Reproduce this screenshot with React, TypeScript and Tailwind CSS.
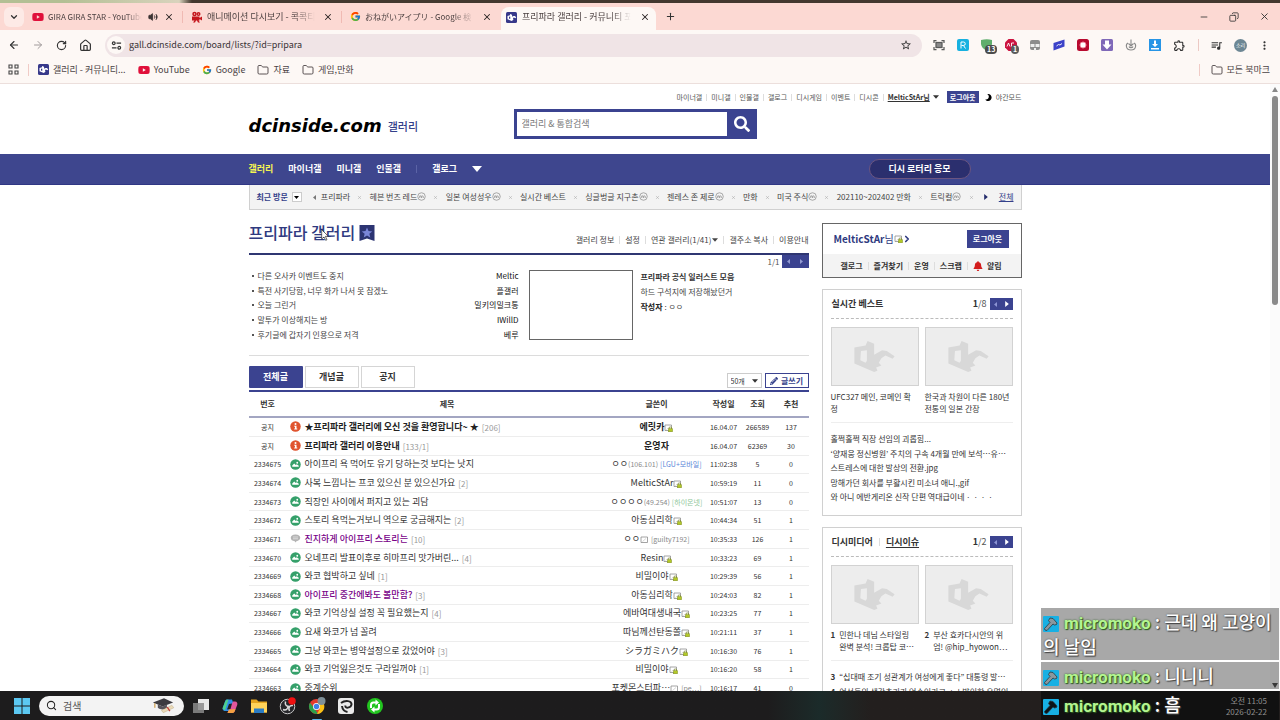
import React from "react";
import { ArrowLeft, ArrowRight, RotateCw, House, Volume2, X, Plus, ChevronDown, ChevronRight, Folder, Minus, Copy, Search } from "lucide-react";
import { FaYoutube, FaBell, FaMoon, FaPencilAlt, FaSearch } from "react-icons/fa";
import { FcGoogle } from "react-icons/fc";
import { MdStarBorder, MdQueueMusic, MdMoreVert, MdOutlineExtension } from "react-icons/md";

function YouTubeIcon() {
  return <FaYoutube className="size-3 shrink-0 text-[#e0103a]" />;
}

function DcIcon() {
  return (
    <svg viewBox="0 0 22 22" className="size-[11px] shrink-0">
      <rect width="22" height="22" rx="3" fill="#37398a" />
      <path
        d="M3 8 8 6.500V4l4 1.500.4 4L15 8h3l2.500 3-2 1.600-2.500-1.600-2 .8.8 3.800L11.500 18 3 14.500zM6 9.500v3.700l2.500.8V9z"
        fill="#fff"
        fillRule="evenodd"
      />
    </svg>
  );
}

function CameraIcon() {
  return (
    <svg viewBox="0 0 24 24" className="size-3 shrink-0" fill="#c4161c">
      <circle cx="7" cy="6" r="4.500" />
      <circle cx="15" cy="6" r="4" />
      <path d="M2 11h15v3l5-3v8l-5-3v3H2zM7 19h3l-2 4H4zM12 19h3l3 4h-4z" />
      <circle cx="7" cy="6" r="1.400" fill="#fbd9d3" />
      <circle cx="15" cy="6" r="1.200" fill="#fbd9d3" />
    </svg>
  );
}

function Placeholder() {
  return (
    <div className="flex h-[59px] items-center justify-center border border-[#d2d2d2] bg-[#ededed]">
      <svg viewBox="0 0 122 94" className="h-[31px] w-[41px]">
        <path
          d="M0 20 34 14 40 0l20 8v34l24-14 14 2 24 16-6 8-22-10-12 8-8 14 8 8-16 6 4 10-10 4L0 68zM20 30l-2 28 16 8 4-6V28z"
          fill="#d8d8d8"
          fillRule="evenodd"
        />
      </svg>
    </div>
  );
}

function ImageIcon() {
  return (
    <svg viewBox="0 0 22 22" className="size-[11px]">
      <circle cx="11" cy="11" r="10.500" fill="#35a06a" />
      <path d="M4.500 15.500V13l4-4 3 3 2-1.500 4 3v2z" fill="#fff" />
      <circle cx="14.500" cy="7.500" r="1.800" fill="#fff" />
    </svg>
  );
}

function NoticeIcon() {
  return (
    <svg viewBox="0 0 22 22" className="size-[11px]">
      <circle cx="11" cy="11" r="10.500" fill="#e0542f" />
      <circle cx="11" cy="6" r="2" fill="#fff" />
      <path d="M8.500 9.500H13V15h1.500v2h-6v-2H10v-3.500H8.500z" fill="#fff" />
    </svg>
  );
}

function TalkIcon() {
  return (
    <svg viewBox="0 0 22 22" className="size-[11px]">
      <path d="M11 3c6 0 9.500 2.700 9.500 6.500S17 16 13 16.300L10.500 19l-1-2.700C4.500 16 1.500 13.500 1.500 9.500S5 3 11 3z" fill="#b4b4b4" />
      <path d="M6 8h10M6 11.500h10" stroke="#eee" strokeWidth="1.300" />
    </svg>
  );
}

function Badge({ fixed = true }: { fixed?: boolean }) {
  return (
    <svg viewBox="0 0 18 16" className="inline-block h-2 w-[9px] shrink-0">
      <path d="M2 2h13v11H2z" fill="#fff" stroke="#8d8d8d" strokeWidth="1.600" />
      <path d="M5 11l7-6" stroke="#c4c4c4" strokeWidth="1.400" />
      {fixed && (
        <g>
          <path d="M10.500 10V8.500a2.500 2.500 0 0 1 5 0V10" fill="none" stroke="#7d8a1c" strokeWidth="1.400" />
          <rect x="9" y="9.500" width="8" height="6" fill="#b3c927" stroke="#7d8a1c" />
        </g>
      )}
    </svg>
  );
}

function TriDown({ className }: { className: string }) {
  return (
    <svg viewBox="0 0 10 6" className={className} fill="currentColor">
      <path d="M0 0h10L5 6z" />
    </svg>
  );
}

function TriLeft({ className }: { className: string }) {
  return (
    <svg viewBox="0 0 6 10" className={className} fill="currentColor">
      <path d="M6 0v10L0 5z" />
    </svg>
  );
}

function TriRight({ className }: { className: string }) {
  return (
    <svg viewBox="0 0 6 10" className={className} fill="currentColor">
      <path d="M0 0v10l6-5z" />
    </svg>
  );
}

const tabs = [
  { icon: <YouTubeIcon />, title: "GIRA GIRA STAR - YouTube", sound: true, size: "text-[8px]" },
  { icon: <CameraIcon />, title: "애니메이션 다시보기 - 콕콕티", size: "text-[9px]" },
  { icon: <FcGoogle className="size-[11px] shrink-0" />, title: "おねがいアイプリ - Google 検", size: "text-[8px]" },
  { icon: <DcIcon />, title: "프리파라 갤러리 - 커뮤니티 포", active: true, size: "text-[9px]" },
];

function TabStrip() {
  return (
    <div className="flex h-[27px] items-center bg-[#fcd9d3] pr-2 pl-1">
      <button aria-label="탭 검색" className="flex size-5 items-center justify-center rounded-md bg-[#fdeae6]">
        <ChevronDown className="size-2.5" strokeWidth={3} />
      </button>
      {tabs.map((t, i) => (
        <div
          key={t.title}
          className={
            t.active
              ? "flex h-[23px] w-[155px] items-center gap-[5px] self-end rounded-t-lg bg-[#fdf8f5] pr-1.5 pb-[3px] pl-[5px]"
              : "flex h-full w-[159px] items-center pl-2"
          }
        >
          <div
            className={
              t.active
                ? "flex min-w-0 flex-1 items-center gap-[5px]"
                : i === 2
                  ? "flex h-3 min-w-0 flex-1 items-center gap-1 pr-[9px]"
                  : "flex h-3 min-w-0 flex-1 items-center gap-1 border-r border-[#f0bab3] pr-2"
            }
          >
            {t.icon}
            <button
              className={
                t.size +
                " min-w-0 flex-1 overflow-hidden text-left leading-4 whitespace-nowrap text-[#4a3f3f] [mask-image:linear-gradient(to_right,#000_80%,transparent_98%)]"
              }
            >
              {t.title}
            </button>
            {t.sound && <Volume2 className="size-2.5 shrink-0 fill-current text-[#3c3434]" />}
            <button aria-label="탭 닫기" className="shrink-0 pl-0.5">
              <X className="size-[10px] text-[#2c2626]" strokeWidth={2.500} />
            </button>
          </div>
        </div>
      ))}
      <button aria-label="새 탭" className="ml-[9px]">
        <Plus className="size-[11px]" strokeWidth={2.200} />
      </button>
      <div className="ml-auto flex items-center gap-5 pr-0.5">
        <button aria-label="최소화"><Minus className="size-2.5" /></button>
        <button aria-label="이전 크기로"><Copy className="size-2.5 -scale-x-100" /></button>
        <button aria-label="닫기"><X className="size-[11px]" /></button>
      </div>
    </div>
  );
}

function Extensions() {
  return (
    <div className="flex items-center gap-3">
      <svg viewBox="0 0 24 24" className="size-3" fill="none" stroke="#5a5a5a" strokeWidth="2.500">
        <path d="M2 8V3h5M17 3h5v5M22 16v5h-5M7 21H2v-5" />
        <rect x="6" y="7" width="12" height="10" fill="#8a8a8a" />
      </svg>
      <svg viewBox="0 0 24 24" className="size-3">
        <rect width="24" height="24" rx="4" fill="#17b1e0" />
        <path d="M8 19V6h5a3.500 3.500 0 0 1 0 7H9m4 0 4 6" fill="none" stroke="#fff" strokeWidth="2" />
      </svg>
      <div className="relative size-3">
        <svg viewBox="0 0 24 24" className="size-3"><path d="M0 2q12-3 22 0v8q-2 9-11 13Q1 18 0 10z" fill="#5fae6c" /></svg>
        <span className="absolute top-1.5 left-1 rounded-sm bg-[#4c4c4c] px-0.5 text-[7px] leading-[9px] font-bold text-white">13</span>
      </div>
      <div className="relative size-3">
        <svg viewBox="0 0 24 24" className="size-3"><path d="M7 0h10l7 7v10l-7 7H7l-7-7V7z" fill="#cc1440" /><path d="M4 15l3-7 3 7m3 0V8h5" stroke="#fff" strokeWidth="1.800" fill="none" /></svg>
        <span className="absolute top-1.5 left-1.5 rounded-sm bg-[#5c5c5c] px-0.5 text-[7px] leading-[9px] font-bold text-white">1</span>
      </div>
      <svg viewBox="0 0 24 24" className="size-3">
        <rect x="2" y="2" width="20" height="20" rx="4" fill="#8c8c8c" />
        <path d="M3 10h8v6H3zM13 10h8v6h-8zM10 18h4v5h-4z" fill="#eee" />
      </svg>
      <svg viewBox="0 0 24 24" className="size-3">
        <path d="M1 8 23 1v14L1 23z" fill="#3c42c8" />
        <path d="m7 14 4-3 3 1 4-3" stroke="#fff" strokeWidth="1.800" fill="none" />
      </svg>
      <svg viewBox="0 0 24 24" className="size-3">
        <rect width="24" height="24" rx="5" fill="#b80a2f" />
        <circle cx="12" cy="12" r="6" fill="#fff" stroke="#f08a9c" strokeWidth="2" />
      </svg>
      <svg viewBox="0 0 24 24" className="size-3">
        <rect width="24" height="24" rx="3" fill="#7f68b8" />
        <path d="M8 3h8v8h5l-9 10-9-10h5z" fill="#fff" />
      </svg>
      <svg viewBox="0 0 24 24" className="size-3" fill="none" stroke="#8a8a8a" strokeWidth="2.200">
        <path d="M12 1v13m-5-5 5 5 5-5" />
        <path d="M6 8c-5 2-5 14 6 14S23 10 18 8M8 15c1 3 7 3 8 0" />
      </svg>
      <svg viewBox="0 0 24 24" className="size-3">
        <rect width="24" height="24" fill="#2795e6" />
        <path d="M10 3h4v7h4l-6 6-6-6h4zM4 18h16v3H4z" fill="#fff" />
      </svg>
      <MdOutlineExtension className="size-[13px] text-[#333]" />
    </div>
  );
}

function Toolbar() {
  return (
    <div className="flex h-[30px] items-center bg-[#fdf8f5] pr-[9px] pl-2">
      <div className="flex items-center gap-3 text-[#333]">
        <button aria-label="뒤로"><ArrowLeft className="size-3" strokeWidth={2.200} /></button>
        <button aria-label="앞으로"><ArrowRight className="size-3 text-[#a09a9a]" /></button>
        <button aria-label="새로고침"><RotateCw className="size-[11px]" strokeWidth={2.500} /></button>
        <button aria-label="홈"><House className="size-[13px]" strokeWidth={2.200} /></button>
      </div>
      <div className="ml-[13px] flex h-[23px] flex-1 items-center rounded-full bg-[#f0e4e6] pr-2.5 pl-0.5">
        <button aria-label="사이트 정보" className="flex size-[18px] items-center justify-center rounded-full bg-[#fdf8f5]">
          <svg viewBox="0 0 24 24" className="size-[11px]" fill="none" stroke="#333" strokeWidth="2.600">
            <circle cx="6" cy="7" r="3" /><path d="M12 7h10M2 17h10" /><circle cx="18" cy="17" r="3" />
          </svg>
        </button>
        <input
          aria-label="주소창"
          defaultValue="gall.dcinside.com/board/lists/?id=pripara"
          className="ml-1 min-w-0 flex-1 bg-transparent text-[9px] leading-4 text-[#3a3336] outline-none"
        />
        <button aria-label="북마크에 추가"><MdStarBorder className="size-3 text-[#333]" /></button>
      </div>
      <div className="ml-[11px] flex items-center">
        <Extensions />
        <div className="ml-3 h-3 w-px bg-[#ecc9c4]" />
        <button aria-label="미디어 제어" className="ml-[11px]"><MdQueueMusic className="size-[13px] text-[#333]" /></button>
        <button className="ml-[11px] flex size-[13px] items-center justify-center rounded-full bg-[#6d8794] text-[5px] text-white">소리</button>
        <button aria-label="메뉴" className="ml-[11px]"><MdMoreVert className="size-[13px]" /></button>
      </div>
    </div>
  );
}

function Bookmarks() {
  return (
    <div className="flex h-6 items-center border-b border-[#ecdfdc] bg-[#fdf8f5] pr-2.5 pb-1 pl-2 text-[9px] leading-4 text-[#4a4244]">
      <svg viewBox="0 0 22 22" className="size-[11px]" fill="none" stroke="#444" strokeWidth="2.200">
        <path d="M2 2h6v6H2zM14 2h6v6h-6zM2 14h6v6H2zM14 14h6v6h-6z" />
      </svg>
      <div className="ml-[9px] h-3 w-px bg-[#f0cbc6]" />
      <div className="ml-[9px] flex items-center gap-3">
        <a href="#dc" className="flex items-center gap-1"><DcIcon />갤러리 - 커뮤니티...</a>
        <a href="#yt" className="flex items-center gap-1"><YouTubeIcon />YouTube</a>
        <a href="#gg" className="flex items-center gap-1"><FcGoogle className="size-[10px]" />Google</a>
        <a href="#f1" className="flex items-center gap-1"><Folder className="size-3" strokeWidth={1.800} />자료</a>
        <a href="#f2" className="flex items-center gap-1"><Folder className="size-3" strokeWidth={1.800} />게임,만화</a>
      </div>
      <div className="ml-auto h-3 w-px bg-[#f0cbc6]" />
      <a href="#all" className="ml-[11px] flex items-center gap-1"><Folder className="size-3" strokeWidth={1.800} />모든 북마크</a>
    </div>
  );
}

const topLinks = ["마이너갤", "미니갤", "인물갤", "갤로그", "디시게임", "이벤트", "디시콘"];

function SiteHeader() {
  return (
    <header className="mx-auto flex h-[70px] w-full max-w-[773px] justify-between">
      <div className="flex w-[265px] items-center gap-1.5 pt-[14px]">
        <a href="#home" className="font-['DejaVu_Sans'] text-[18px] leading-5 font-bold text-black italic">dcinside.com</a>
        <a href="#gall" className="text-[11px] leading-5 font-medium text-[#34408a]">갤러리</a>
      </div>
      <form className="mt-[25px] flex h-[30px] w-[243px] bg-[#3b4390]" onSubmit={(e) => e.preventDefault()}>
        <input
          aria-label="갤러리 & 통합검색"
          placeholder="갤러리 & 통합검색"
          className="my-[3px] ml-[3px] min-w-0 flex-1 bg-white px-[5px] text-[9px] leading-4 outline-none placeholder:text-[#777]"
        />
        <button aria-label="검색" className="flex w-[30px] items-center justify-center text-white">
          <FaSearch className="size-4" />
        </button>
      </form>
      <div className="-ml-20 flex w-[345px] items-center gap-1 self-start pt-[7px] text-[7px] leading-3 whitespace-nowrap text-[#555]">
        {topLinks.map((l) => (
          <React.Fragment key={l}>
            <a href="#top">{l}</a>
            <span className="h-[7px] w-px bg-[#ddd]" />
          </React.Fragment>
        ))}
        <button className="flex items-center gap-[3px] font-bold text-[#333]">
          <span className="underline underline-offset-1">MelticStAr님</span>
          <TriDown className="h-1 w-1.5" />
        </button>
        <button className="ml-1 bg-[#3b4390] px-[3px] font-bold text-white">로그아웃</button>
        <a href="#night" className="ml-auto flex items-center gap-1">
          <FaMoon className="size-[7px] -scale-x-100 text-black" />
          야간모드
        </a>
      </div>
    </header>
  );
}

function Nav() {
  return (
    <nav className="h-[31px] border-b border-[#303784] bg-[#3e468e]">
      <div className="mx-auto flex h-full w-full max-w-[773px] items-center gap-[15px] text-[9px] leading-4 font-bold text-white">
        <a href="#g" className="text-[#f5f552]">갤러리</a>
        <a href="#m">마이너갤</a>
        <a href="#n">미니갤</a>
        <a href="#p">인물갤</a>
        <span className="h-2 w-px bg-[#5b63a6]" />
        <a href="#l">갤로그</a>
        <button aria-label="더보기"><TriDown className="h-1.5 w-2.5" /></button>
        <a href="#lottery" className="mr-[51px] ml-auto flex h-5 w-[102px] items-center justify-center rounded-full border border-[#6b5580] bg-[#2b2f6e]">
          디시 로터리 응모
        </a>
      </div>
    </nav>
  );
}

const recents = [
  ["프리파라", false],
  ["헤븐 번즈 레드", true],
  ["일본 여성성우", true],
  ["실시간 베스트", false],
  ["싱글벙글 지구촌", true],
  ["젠레스 존 제로", true],
  ["만화", false],
  ["미국 주식", true],
  ["202110~202402 만화", false],
  ["트릭컬", true],
] as const;

function MinorMark() {
  return (
    <svg viewBox="0 0 18 18" role="img" aria-label="마이너" className="mb-0.5 size-[9px]" fill="none" stroke="#888">
      <circle cx="9" cy="9" r="7.500" strokeWidth="1.400" />
      <path d="M5.500 12V7.500M5.500 8.500q3.500-2 3.500.8V12M9 8.500q3.500-2 3.500.8V12" strokeWidth="1.500" />
    </svg>
  );
}

function RecentBar() {
  return (
    <div className="mx-auto flex h-[25px] w-full max-w-[773px] items-center border border-t-0 border-[#d0d0d0] bg-[#f3f3f3] px-[7px] text-[8px] leading-3 whitespace-nowrap text-[#444]">
      <span className="font-bold text-[#34408a]">최근 방문</span>
      <button aria-label="최근 방문 펼치기" className="ml-1 flex size-[10px] items-center justify-center border border-[#ccc] bg-white">
        <TriDown className="h-[3px] w-[5px] text-black" />
      </button>
      <TriLeft className="ml-[11px] h-[5px] w-[3px] text-[#777]" />
      <ul className="ml-[5px] flex flex-1 items-center justify-between">
        {recents.map(([name, minor]) => (
          <React.Fragment key={name}>
            <li className="flex items-center">
              <a href="#r">{name}</a>
              {minor && <MinorMark />}
            </li>
            <li aria-hidden="true"><X className="size-[5px] text-[#999]" /></li>
          </React.Fragment>
        ))}
      </ul>
      <TriRight className="ml-2.5 h-1.5 w-1 text-[#222a6a]" />
      <a href="#all" className="ml-[11px] text-[#34408a] underline underline-offset-1">전체</a>
    </div>
  );
}

function Pager({ page, total }: { page: string; total: string }) {
  return (
    <div className="flex items-center gap-[3px] text-[9px] leading-3 text-[#555]">
      <span><b className="text-[#333]">{page}</b>/{total}</span>
      <span className="flex h-3 w-[23px] bg-[#3b4390]">
        <button aria-label="이전" className="flex flex-1 items-center justify-center text-[#8c94d4]"><TriLeft className="h-[5px] w-[3px]" /></button>
        <button aria-label="다음" className="flex flex-1 items-center justify-center text-white"><TriRight className="h-1.5 w-1" /></button>
      </span>
    </div>
  );
}

const issues = [
  ["다른 오사카 이벤트도 중지", "Meltic"],
  ["특전 사기당함, 너무 화가 나서 못 참겠노", "플갤러"],
  ["오늘 그린거", "밀키의밀크통"],
  ["말투가 이상해지는 방", "IWillD"],
  ["후기글에 갑자기 인용으로 저격", "베루"],
];

function GalleryHead() {
  return (
    <section>
      <div className="flex h-[45px] items-center justify-between border-b-2 border-[#2f3672] text-[8px] text-[#444]">
        <h1 className="flex items-center gap-1 text-[16px] leading-6 font-medium text-[#2f3a80]">
          프리파라 갤러리
          <svg viewBox="0 0 32 32" className="mt-0.5 size-4">
            <path d="M1 0h30v32l-15-5-15 5z" fill="#2c3472" />
            <path d="m16 5 3 7.200 7.500.6-5.800 4.800 1.900 7.200L16 20.800l-6.600 4 1.900-7.200-5.800-4.800 7.500-.6z" fill="#7a86d8" />
          </svg>
        </h1>
        <div className="flex items-center gap-[5px] pt-4 leading-3 whitespace-nowrap">
          <a href="#info">갤러리 정보</a>
          <span className="h-2 w-px bg-[#ddd]" />
          <a href="#set">설정</a>
          <span className="h-2 w-px bg-[#ddd]" />
          <button className="flex items-center gap-px">연관 갤러리(1/41)<TriDown className="h-1 w-1.5" /></button>
          <span className="h-2 w-px bg-[#ddd]" />
          <button>갤주소 복사</button>
          <span className="h-2 w-px bg-[#ddd]" />
          <a href="#use">이용안내</a>
        </div>
      </div>
      <div className="flex h-[13px] items-center justify-end gap-0.5 text-[8px] leading-3 text-[#555]">
        1/1
        <span className="flex h-full w-[27px] bg-[#3b4390] text-[#949bd2]">
          <button aria-label="이전" className="flex flex-1 items-center justify-center"><TriLeft className="h-[5px] w-[3px]" /></button>
          <button aria-label="다음" className="flex flex-1 items-center justify-center"><TriRight className="h-[5px] w-[3px]" /></button>
        </span>
      </div>
      <div className="flex h-[88px] border-b border-[#dcdcdc] pt-px text-[8px]">
        <ul className="grid h-[73px] w-[270px] grid-rows-5 pl-[3px] text-[#444]">
          {issues.map(([t, w]) => (
            <li key={t} className="flex items-center justify-between leading-3">
              <a href="#issue" className="flex items-center gap-1"><span className="size-[2px] bg-[#555]" />{t}</a>
              <span className="text-[#111]">{w}</span>
            </li>
          ))}
        </ul>
        <div className="mt-px ml-2.5 h-[70px] w-[104px] border border-[#666]" />
        <div className="ml-2 grid h-[46px] grid-rows-3 items-center leading-3 text-[#444]">
          <b className="text-[#333]">프리파라 공식 일러스트 모음</b>
          <p>하드 구석지에 저장해놨던거</p>
          <p><b className="text-[#222]">작성자</b> : ㅇㅇ</p>
        </div>
      </div>
    </section>
  );
}

type Writer = { name: string; badge?: "fixed" | "half"; ip?: string; net?: string; netColor?: string; id?: string };
type Row = { no: string; kind: "notice" | "image" | "talk"; title: string; reply?: string; visited?: boolean; writer: Writer; date: string; views: string; rec: string };

const f = (name: string): Writer => ({ name, badge: "fixed" });

const rows: Row[] = [
  { no: "공지", kind: "notice", title: "★프리파라 갤러리에 오신 것을 환영합니다~ ★", reply: "206", writer: f("에릿카"), date: "16.04.07", views: "266589", rec: "137" },
  { no: "공지", kind: "notice", title: "프리파라 갤러리 이용안내", reply: "133/1", writer: { name: "운영자" }, date: "16.04.07", views: "62369", rec: "30" },
  { no: "2334675", kind: "image", title: "아이프리 욕 먹어도 유기 당하는것 보다는 낫지", writer: { name: "ㅇㅇ", ip: "106.101", net: "LGU+모바일", netColor: "text-[#5b86d8]" }, date: "11:02:38", views: "5", rec: "0" },
  { no: "2334674", kind: "image", title: "사복 느낌나는 프코 있으신 분 있으신가요", reply: "2", writer: f("MelticStAr"), date: "10:59:19", views: "11", rec: "0" },
  { no: "2334673", kind: "image", title: "직장인 사이에서 퍼지고 있는 괴담", writer: { name: "ㅇㅇㅇㅇ", ip: "49.254", net: "하이온넷", netColor: "text-[#8fc79b]" }, date: "10:51:07", views: "13", rec: "0" },
  { no: "2334672", kind: "image", title: "스토리 욕먹는거보니 역으로 궁금해지는", reply: "2", writer: f("아동심리학"), date: "10:44:34", views: "51", rec: "1" },
  { no: "2334671", kind: "talk", title: "진지하게 아이프리 스토리는", reply: "10", visited: true, writer: { name: "ㅇㅇ", badge: "half", id: "guilty7192" }, date: "10:35:33", views: "126", rec: "1" },
  { no: "2334670", kind: "image", title: "오네프리 발표이후로 히마프리 맛가버린...", reply: "4", writer: f("Resin"), date: "10:33:23", views: "69", rec: "1" },
  { no: "2334669", kind: "image", title: "와코 협박하고 싶네", reply: "1", writer: f("비밀이야"), date: "10:29:39", views: "56", rec: "1" },
  { no: "2334668", kind: "image", title: "아이프리 중간에봐도 볼만함?", reply: "3", visited: true, writer: f("아동심리학"), date: "10:24:03", views: "82", rec: "1" },
  { no: "2334667", kind: "image", title: "와코 기억상실 설정 꼭 필요했는지", reply: "4", writer: f("에바여대생내국"), date: "10:23:25", views: "77", rec: "1" },
  { no: "2334666", kind: "image", title: "요새 와코가 넘 꼴려", writer: f("따님께선탄동쫄"), date: "10:21:11", views: "37", rec: "1" },
  { no: "2334665", kind: "image", title: "그냥 와코는 병약설정으로 갔었어야", reply: "3", writer: f("シラガミハク"), date: "10:16:30", views: "76", rec: "1" },
  { no: "2334664", kind: "image", title: "와코 기억잃은것도 구라일꺼야", reply: "1", writer: f("비밀이야"), date: "10:16:20", views: "58", rec: "1" },
  { no: "2334663", kind: "image", title: "중계순위", writer: { name: "포켓몬스터파⋯", badge: "half", id: "pe⋯" }, date: "10:16:17", views: "41", rec: "0" },
];

function PostRow({ row }: { row: Row }) {
  const notice = row.kind === "notice";
  const w = row.writer;
  return (
    <tr className="border-b border-[#ededed] text-center text-[7px] leading-3 text-[#333]">
      <td>{row.no}</td>
      <td>
        <div className="flex h-3 items-center gap-1 pl-[3px] text-[9px] whitespace-nowrap">
          {notice ? <NoticeIcon /> : row.kind === "image" ? <ImageIcon /> : <TalkIcon />}
          <a
            href="#post"
            className={notice ? "font-bold text-[#222]" : row.visited ? "font-medium text-[#770088]" : "text-[#333]"}
          >
            {row.title}
          </a>
          {row.reply && <a href="#reply" className="-ml-px pt-0.5 text-[8px] text-[#999]">[{row.reply}]</a>}
        </div>
      </td>
      <td>
        <div className="flex h-3 items-center justify-center text-[9px] whitespace-nowrap">
          <span className={notice ? "font-bold text-[#222]" : "text-[#333]"}>{w.name}</span>
          {w.ip && <span className="text-[7px] text-[#888]">({w.ip})</span>}
          {w.net && <span className={"ml-0.5 text-[7px] " + w.netColor}>[{w.net}]</span>}
          {w.badge && <span className="flex pt-0.5"><Badge fixed={w.badge === "fixed"} /></span>}
          {w.id && <span className="ml-0.5 text-[7px] text-[#888]">[{w.id}]</span>}
        </div>
      </td>
      <td>{row.date}</td>
      <td>{row.views}</td>
      <td>{row.rec}</td>
    </tr>
  );
}

function Board() {
  return (
    <section>
      <div className="flex h-[34px] justify-between pt-2.5">
        <div className="flex h-[22px] gap-0.5 text-[9px] leading-4 font-bold">
          <button className="w-[54px] rounded-[1px] bg-[#3b4390] text-white">전체글</button>
          <button className="w-[54px] border border-[#d5d5d5] text-[#333]">개념글</button>
          <button className="w-[54px] border border-[#d5d5d5] text-[#333]">공지</button>
        </div>
        <div className="mb-0.5 flex h-[15px] items-center gap-[3px] self-end text-[8px] leading-3">
          <div className="relative flex h-full w-[35px] items-center">
            <select aria-label="목록 수" className="h-full w-full appearance-none border border-[#ccc] bg-white pl-[3px] text-[7px] text-[#333]">
              <option>50개</option>
              <option>100개</option>
            </select>
            <TriDown className="pointer-events-none absolute right-1 h-1 w-1.5 text-[#333]" />
          </div>
          <button className="flex h-full w-11 items-center justify-center gap-[3px] border border-[#3b4390] font-bold text-[#34408a]">
            <FaPencilAlt className="size-2" />
            글쓰기
          </button>
        </div>
      </div>
      <table className="h-[308px] w-full table-fixed border-collapse border-t-2 border-[#3b4390]">
        <colgroup>
          <col className="w-[38px]" />
          <col />
          <col className="w-[98px]" />
          <col className="w-[36px]" />
          <col className="w-[32px]" />
          <col className="w-[35px]" />
        </colgroup>
        <thead>
          <tr className="h-[26px] border-b-2 border-[#a3a6c2] text-[8px] leading-3 text-[#333]">
            <th>번호</th>
            <th>제목</th>
            <th>글쓴이</th>
            <th>작성일</th>
            <th>조회</th>
            <th>추천</th>
          </tr>
        </thead>
        <tbody>
          {rows.map((r) => (
            <PostRow key={r.no + r.title} row={r} />
          ))}
        </tbody>
      </table>
    </section>
  );
}

const best = ["훌쩍훌쩍 직장 선임의 괴롭힘...", "‘양재웅 정신병원’ 주치의 구속 4개월 만에 보석⋯유⋯", "스트레스에 대한 발상의 전환.jpg", "망해가던 회사를 부활시킨 미소녀 애니.,gif", "와 아니 에반게리온 신작 단편 역대급이네ㆍㆍㆍㆍ"];

function Sidebar() {
  return (
    <aside className="flex w-[200px] shrink-0 flex-col gap-[11px] pt-[13px] text-[8px] leading-3 text-[#333]">
      <section className="h-[55px] border border-[#666] bg-white">
        <div className="flex h-[30px] items-center justify-between pr-3 pl-[11px]">
          <a href="#me" className="flex items-center text-[10px] text-[#2f3a80]">
            <b>MelticStAr</b>님
            <Badge />
            <ChevronRight className="-ml-px size-[10px]" strokeWidth={4} />
          </a>
          <button className="h-[18px] w-[42px] bg-[#3b4390] font-bold text-white">로그아웃</button>
        </div>
        <div className="flex h-[23px] items-center gap-[5px] bg-[#f3f3f3] pl-[18px] font-bold whitespace-nowrap">
          <a href="#a">갤로그</a>
          <span className="h-2 w-px bg-[#ddd]" />
          <a href="#b">즐겨찾기</a>
          <span className="h-2 w-px bg-[#ddd]" />
          <a href="#c">운영</a>
          <span className="h-2 w-px bg-[#ddd]" />
          <a href="#d">스크랩</a>
          <span className="h-2 w-px bg-[#ddd]" />
          <a href="#e" className="flex items-center gap-1"><FaBell className="size-[10px] text-[#d31c1c]" />알림</a>
        </div>
      </section>
      <section className="h-[227px] border border-[#d0d0d0] px-2">
        <div className="flex h-[29px] items-center justify-between border-b border-dashed border-[#bbb]">
          <h2 className="pl-px text-[9px] font-bold">실시간 베스트</h2>
          <Pager page="1" total="8" />
        </div>
        <div className="grid grid-cols-2 gap-x-1.5 gap-y-[5px] border-b border-[#eee] pt-2 pb-[7px]">
          <Placeholder />
          <Placeholder />
          <a href="#1" className="pr-1">UFC327 메인, 코메인 확정</a>
          <a href="#2">한국과 차원이 다른 180년 전통의 일본 간장</a>
        </div>
        <ul className="mt-[10px] grid h-[73px] grid-rows-5 whitespace-nowrap">
          {best.map((t) => (
            <li key={t}><a href="#best">{t}</a></li>
          ))}
        </ul>
      </section>
      <section className="h-[227px] border border-[#d0d0d0] px-2">
        <div className="flex h-[29px] items-center border-b border-dashed border-[#bbb] text-[9px] font-bold">
          <h2 className="pl-px">디시미디어</h2>
          <span className="mx-1.5 h-2 w-px bg-[#ddd]" />
          <h2 className="mr-auto underline underline-offset-2">디시이슈</h2>
          <div className="font-normal"><Pager page="1" total="2" /></div>
        </div>
        <div className="grid grid-cols-2 gap-x-1.5 gap-y-[5px] border-b border-[#eee] pt-2 pb-[7px]">
          <Placeholder />
          <Placeholder />
          <div className="flex gap-1 pr-1"><b>1</b><a href="#i1">민한나 데님 스타일링 완벽 분석! 크롭탑 코⋯</a></div>
          <div className="flex gap-1"><b>2</b><a href="#i2">부산 효카다시안의 위엄! @hip_hyowon⋯</a></div>
        </div>
        <ul className="mt-[10px] grid h-[73px] grid-rows-5 whitespace-nowrap">
          <li className="flex gap-1"><b>3</b><a href="#i3">“십대때 조기 성관계가 여성에게 좋다” 대통령 발⋯</a></li>
          <li className="flex gap-1"><b>4</b><a href="#i4">여성들의 색감추리가 억수이라고 ㅅㅣ발이한 유명인</a></li>
        </ul>
      </section>
    </aside>
  );
}

function Taskbar() {
  return (
    <footer className="flex h-[29px] shrink-0 items-center bg-linear-to-r from-[#1d1c1d] from-60% via-[#1b2b2a] via-64% to-[#231f1e] to-68% pr-3 pl-3.5">
      <button aria-label="시작">
        <svg viewBox="0 0 32 32" className="size-4"><path d="M0 0h15v15H0zM17 0h15v15H17zM0 17h15v15H0zM17 17h15v15H17z" fill="#5cc8f2" /></svg>
      </button>
      <label className="ml-[9px] flex h-5 w-[145px] items-center rounded-full bg-[#f3f3f3] pr-2 pl-[7px]">
        <Search className="size-[11px] text-[#222]" strokeWidth={2.200} />
        <input aria-label="검색" placeholder="검색" className="ml-[6px] min-w-0 flex-1 bg-transparent text-[10px] leading-4 outline-none placeholder:text-[#555]" />
        <svg viewBox="0 0 72 46" className="h-[15px] w-6">
          <path d="M2 14 36 1l28 13-32 12z" fill="#3c3b40" />
          <path d="M17 20v10c8 7 20 7 28 0V20l-13 6z" fill="#55535a" />
          <path d="M8 16v14" stroke="#c48a2a" strokeWidth="3" />
          <path d="m28 38 32-16 6 8-32 15z" fill="#e9d9b8" stroke="#a98f5d" />
          <path d="m46 28 8 12" stroke="#c2403a" strokeWidth="4" />
        </svg>
      </label>
      <div className="ml-2 flex items-center gap-[11px]">
        <svg viewBox="0 0 36 36" className="size-[18px]"><path d="M12 4h22v22H12z" fill="#e8e8e8" /><path d="M2 12h22v20H2z" fill="#8b8b8b" opacity=".85" /></svg>
        <svg viewBox="0 0 36 36" className="size-[18px]">
          <path d="M12 5h10l4 11-6 12H9C4 28 2 24 4 20l4-11c1-3 2-4 4-4z" fill="#2f8fe8" />
          <path d="M7 13c2-7 4-8 8-8l-4 13-3 9-5-4z" fill="#4fd08c" />
          <path d="M24 9h4c4 0 6 4 4 8l-4 10c-1 3-3 5-5 5H13z" fill="#e2559b" />
          <path d="M13 32h10c3 0 4-2 5-5l1-3-13 1z" fill="#f5a142" />
          <path d="m16 14 6-1-3 11-7 1z" fill="#202020" />
        </svg>
        <svg viewBox="0 0 36 36" className="size-[18px]"><path d="M2 5h11l4 4h17v22H2z" fill="#e5a520" /><path d="M2 12h32v19H2z" fill="#ffd35a" /><path d="M8 23h20v9H8z" fill="#2b7cc4" /></svg>
        <svg viewBox="0 0 36 36" className="size-[18px]">
          <circle cx="17" cy="19" r="14.500" fill="#26262a" stroke="#c9c9c9" strokeWidth="2" />
          <path d="M13 9c-2 8 3 10 8 10M28 17c-7-1-10 5-7 11M8 25c6 3 10-1 10-7" fill="none" stroke="#d8d8d8" strokeWidth="3" />
          <circle cx="26" cy="8" r="7.500" fill="#f01010" />
        </svg>
        <div className="relative flex">
          <svg viewBox="0 0 36 36" className="size-[18px]">
            <circle cx="17" cy="19" r="15" fill="#e33b2e" />
            <path d="M4 11.500 13 23l7 10.500A15 15 0 0 1 4 11.500z" fill="#2ba24c" />
            <path d="M17 12h14a15 15 0 0 1-13 22l6-11z" fill="#fbc116" />
            <circle cx="17" cy="19" r="7" fill="#fff" /><circle cx="17" cy="19" r="5.500" fill="#3f7fe8" />
            <circle cx="27" cy="8" r="8" fill="#7d8f98" />
          </svg>
          <span className="absolute -bottom-1.5 left-1 h-0.5 w-2.5 rounded-full bg-[#5cb4ec]" />
        </div>
        <svg viewBox="0 0 36 36" className="size-[18px]">
          <rect x="2" y="2" width="32" height="32" rx="6" fill="#e9e9e9" />
          <path d="M8 12c8-6 22-5 21 3-1 7-14 9-12 2M10 18c1 8 6 11 11 12" fill="none" stroke="#222" strokeWidth="4" />
        </svg>
        <svg viewBox="0 0 36 36" className="size-[18px]">
          <circle cx="18" cy="18" r="16" fill="#22c51f" />
          <path d="M10 22v-6a5 5 0 0 1 5-5h5M26 14v6a5 5 0 0 1-5 5h-5" fill="none" stroke="#fff" strokeWidth="4" />
          <path d="m19 5 7 6-7 6zM17 19l-7 6 7 6z" fill="#fff" />
        </svg>
      </div>
    </footer>
  );
}

function HammerIcon({ dark }: { dark?: boolean }) {
  return (
    <svg viewBox="0 0 32 32" className="mr-[5px] inline-block size-4 align-[-3px]">
      <rect width="32" height="32" rx="2" fill="#17b0e4" />
      <path
        d="M14 4 20 5l8 9-1 3-4 1-3-2L8 29l-4-1-1-3 11-12-3-4z"
        fill={dark ? "#0c1418" : "#8b979d"}
        stroke="#26343c"
        strokeWidth="1.500"
      />
    </svg>
  );
}

function ChatLine({ text, dark }: { text: string; dark?: boolean }) {
  return (
    <p
      className={
        (dark ? "bg-[#111] pb-[3px]" : "bg-black/34 pb-px") +
        " px-[2px] pt-px text-[18px] leading-[25px] font-medium break-all text-white [text-shadow:0_0_2px_#444,1px_1px_1px_#444]"
      }
    >
      <HammerIcon dark={dark} />
      <span className="font-['Roboto'] text-[17px] leading-4 font-bold text-[#b4f590] [text-shadow:0_0_2px_#2c5c20,1px_1px_1px_#2c5c20]">micromoko</span> : {text}
    </p>
  );
}

function Chat() {
  return (
    <div className="absolute right-px bottom-0 flex w-[238px] flex-col gap-0.5">
      <ChatLine text="근데 왜 고양이의 날임" />
      <ChatLine text="니니니" />
      <div className="relative">
        <ChatLine text="흠" dark />
        <time className="absolute top-1 right-3 text-right text-[8px] leading-[11px] text-[#909090]">
          오전 11:05
          <br />
          2026-02-22
        </time>
      </div>
    </div>
  );
}

export default function App() {
  return (
    <div className="relative flex h-screen flex-col overflow-hidden bg-white font-['Noto_Sans_CJK_KR','Liberation_Sans',sans-serif] text-[#333]">
      <div className="h-[3px] shrink-0 bg-linear-to-r from-[#b3bf94] from-5% via-[#d9d3bd] via-14% to-[#43382f] to-15%" />
      <div className="shrink-0">
        <TabStrip />
        <Toolbar />
        <Bookmarks />
      </div>
      <div className="flex min-h-0 flex-1">
        <div className="min-w-0 flex-1 overflow-hidden">
          <SiteHeader />
          <Nav />
          <RecentBar />
          <div className="mx-auto flex w-full max-w-[773px] gap-[13px]">
            <main className="min-w-0 flex-1">
              <GalleryHead />
              <Board />
            </main>
            <Sidebar />
          </div>
        </div>
        <div className="flex w-2.5 flex-col items-center gap-1 bg-[#fbfbfb] py-[3px]">
          <svg viewBox="0 0 10 8" className="h-[5px] w-1.5" fill="#888"><path d="M0 8h10L5 0z" /></svg>
          <div className="h-[209px] w-1.5 rounded-full bg-[#8a8a8a]" />
          <svg viewBox="0 0 10 8" className="mt-auto h-[5px] w-1.5" fill="#555"><path d="M0 0h10L5 8z" /></svg>
        </div>
      </div>
      <Taskbar />
      <Chat />
      <svg viewBox="0 0 12 18" className="pointer-events-none absolute top-[229px] left-[321px] h-3 w-2">
        <path d="M1 1v14l3.500-3 2.500 5 2-1-2.500-5H11z" fill="#fff" stroke="#222" />
      </svg>
    </div>
  );
}
